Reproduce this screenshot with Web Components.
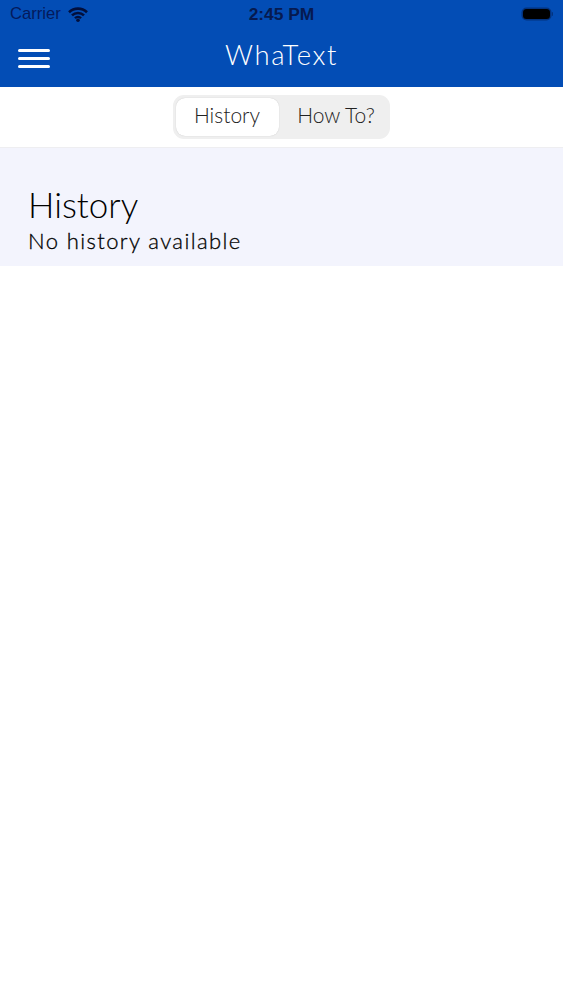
<!DOCTYPE html>
<html><head><meta charset="utf-8"><style>
html,body{margin:0;padding:0;background:#fff}
body{width:563px;height:1000px;overflow:hidden;font-family:Lato,sans-serif}
</style></head><body>
<app-shell>
  <status-bar></status-bar>
  <nav-bar>WhaText</nav-bar>
  <seg-control></seg-control>
  <history-panel></history-panel>
</app-shell>
<script>
function def(name,html){customElements.define(name,class extends HTMLElement{constructor(){super();this.attachShadow({mode:'open'}).innerHTML=html}})}
def('app-shell',`<style>:host{display:flex;flex-direction:column;width:563px;height:1000px;background:#fff}</style><slot></slot>`);
def('status-bar',`<style>
:host{display:grid;grid-template-columns:1fr auto 1fr;align-items:center;height:29px;background:#034db5;color:#04195c;font:400 16.6px "Liberation Sans",sans-serif;box-sizing:border-box;padding:0 10px 1px}
.l{display:flex;align-items:center;gap:7px;color:#041a5c}
.t{font-weight:700;color:#061a50;font-size:17.4px}
.r{display:flex;justify-content:flex-end;padding-right:0;align-items:center;gap:2px}
.b{width:27px;height:10px;border-radius:3.5px;background:#000;box-shadow:0 0 0 1.5px #03337f;box-sizing:border-box}
.n{width:1.5px;height:4px;background:#03337f;border-radius:0 1px 1px 0}
svg{display:block}
</style>
<div class="l"><span>Carrier</span><svg width="20" height="15" viewBox="0 0 20 15"><path fill="none" stroke="#020f3c" stroke-width="2.6" d="M1 5.2a13 13 0 0 1 18 0M4 8.4a8.6 8.6 0 0 1 12 0"/><path fill="none" stroke="#020f3c" stroke-width="2.4" d="M7 11.2a4 4 0 0 1 6 0"/><circle cx="10" cy="13.2" r="1.8" fill="#020f3c"/></svg></div>
<div class="t">2:45 PM</div>
<div class="r"><div class="b"></div><div class="n"></div></div>`);
def('nav-bar',`<style>
:host{display:grid;grid-template-columns:1fr auto 1fr;align-items:center;height:58px;background:#034db5;color:#fff;font:300 27.5px Lato,sans-serif;letter-spacing:1.6px;padding-bottom:4px;box-sizing:border-box}
.m{display:flex;flex-direction:column;gap:5px;margin:4px 0 0 18px;width:32px}
.m i{display:block;height:3px;border-radius:1.5px;background:#fff}
.x{margin-bottom:4px}
</style><div class="m"><i></i><i></i><i></i></div><div class="x"><slot></slot></div><div></div>`);
def('seg-control',`<style>
:host{display:flex;justify-content:center;align-items:center;height:61px;background:#fff;border-bottom:1px solid #eeeef1;box-sizing:border-box;padding:0 1px 1px 0}
.w{display:flex;width:217px;height:44px;border-radius:11px;background:#efefef;padding:3px;box-sizing:border-box;font:300 21px/34px Lato,sans-serif;color:#222}
.a,.o{display:flex;justify-content:center;border-radius:9px}
.a{width:103px;background:#fff;box-shadow:0 0 1px #bbb}
.o{flex:1;padding-left:7px}
</style><div class="w"><div class="a">History</div><div class="o">How To?</div></div>`);
def('history-panel',`<style>
:host{display:block;background:#f3f4fd;height:118px;box-sizing:border-box;padding:34px 28px 0;color:#000}
h1{margin:0;font:300 35px/44px Lato,sans-serif}
p{margin:1px 0 0;font:300 22px/28px Lato,sans-serif;letter-spacing:1.4px;-webkit-text-stroke:.3px #000}
</style><h1>History</h1><p>No history available</p>`);
</script></body></html>
